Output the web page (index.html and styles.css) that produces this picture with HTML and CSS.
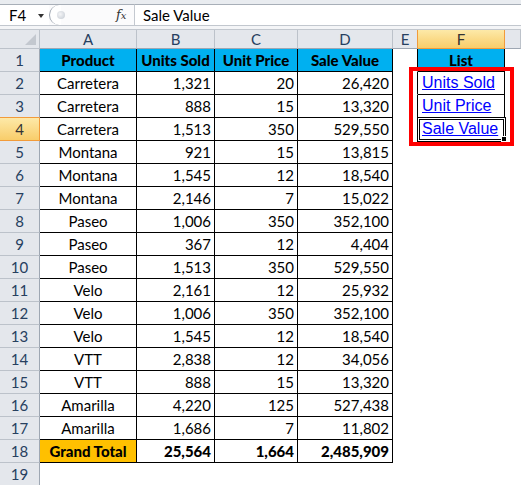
FILE: index.html
```html
<!DOCTYPE html>
<html>
<head>
<meta charset="utf-8">
<link rel="stylesheet" href="styles.css">
</head>
<body>
<div class="app">
  <div class="fbar">
    <div class="namebox"><span class="nb-text">F4</span><span class="dd"></span></div>
    <div class="mid"><span class="bracket"></span><span class="knob"></span><span class="fx"><i>f</i><i class="fxx">x</i></span></div>
    <div class="input">Sale Value</div>
  </div>
  <div class="gap"></div>
  <div class="sheet">
    <div class="corner"><span class="tri"></span></div>
    <div class="ch">A</div><div class="ch">B</div><div class="ch">C</div><div class="ch">D</div><div class="ch ch-pre">E</div><div class="ch ch-sel">F</div><div class="ch"></div>

    <div class="rh">1</div><div class="d hd">Product</div><div class="d hd">Units Sold</div><div class="d hd">Unit Price</div><div class="d hd">Sale Value</div><div class="e eb"></div><div class="d hd">List</div><div class="e"></div>

    <div class="rh">2</div><div class="d t">Carretera</div><div class="d n">1,321</div><div class="d n">20</div><div class="d n">26,420</div><div class="e eb"></div><div class="d lk"><a>Units Sold</a></div><div class="e"></div>

    <div class="rh rh-pre">3</div><div class="d t">Carretera</div><div class="d n">888</div><div class="d n">15</div><div class="d n">13,320</div><div class="e eb"></div><div class="d lk"><a>Unit Price</a></div><div class="e"></div>

    <div class="rh rh-sel">4</div><div class="d t">Carretera</div><div class="d n">1,513</div><div class="d n">350</div><div class="d n">529,550</div><div class="e eb"></div><div class="d lk active"><a>Sale Value</a><span class="handle"></span></div><div class="e"></div>

    <div class="rh">5</div><div class="d t">Montana</div><div class="d n">921</div><div class="d n">15</div><div class="d n">13,815</div><div class="e"></div><div class="e"></div><div class="e"></div>

    <div class="rh">6</div><div class="d t">Montana</div><div class="d n">1,545</div><div class="d n">12</div><div class="d n">18,540</div><div class="e"></div><div class="e"></div><div class="e"></div>

    <div class="rh">7</div><div class="d t">Montana</div><div class="d n">2,146</div><div class="d n">7</div><div class="d n">15,022</div><div class="e"></div><div class="e"></div><div class="e"></div>

    <div class="rh">8</div><div class="d t">Paseo</div><div class="d n">1,006</div><div class="d n">350</div><div class="d n">352,100</div><div class="e"></div><div class="e"></div><div class="e"></div>

    <div class="rh">9</div><div class="d t">Paseo</div><div class="d n">367</div><div class="d n">12</div><div class="d n">4,404</div><div class="e"></div><div class="e"></div><div class="e"></div>

    <div class="rh">10</div><div class="d t">Paseo</div><div class="d n">1,513</div><div class="d n">350</div><div class="d n">529,550</div><div class="e"></div><div class="e"></div><div class="e"></div>

    <div class="rh">11</div><div class="d t">Velo</div><div class="d n">2,161</div><div class="d n">12</div><div class="d n">25,932</div><div class="e"></div><div class="e"></div><div class="e"></div>

    <div class="rh">12</div><div class="d t">Velo</div><div class="d n">1,006</div><div class="d n">350</div><div class="d n">352,100</div><div class="e"></div><div class="e"></div><div class="e"></div>

    <div class="rh">13</div><div class="d t">Velo</div><div class="d n">1,545</div><div class="d n">12</div><div class="d n">18,540</div><div class="e"></div><div class="e"></div><div class="e"></div>

    <div class="rh">14</div><div class="d t">VTT</div><div class="d n">2,838</div><div class="d n">12</div><div class="d n">34,056</div><div class="e"></div><div class="e"></div><div class="e"></div>

    <div class="rh">15</div><div class="d t">VTT</div><div class="d n">888</div><div class="d n">15</div><div class="d n">13,320</div><div class="e"></div><div class="e"></div><div class="e"></div>

    <div class="rh">16</div><div class="d t">Amarilla</div><div class="d n">4,220</div><div class="d n">125</div><div class="d n">527,438</div><div class="e"></div><div class="e"></div><div class="e"></div>

    <div class="rh">17</div><div class="d t">Amarilla</div><div class="d n">1,686</div><div class="d n">7</div><div class="d n">11,802</div><div class="e"></div><div class="e"></div><div class="e"></div>

    <div class="rh">18</div><div class="d gt">Grand Total</div><div class="d n b">25,564</div><div class="d n b">1,664</div><div class="d n b">2,485,909</div><div class="e"></div><div class="e"></div><div class="e"></div>

    <div class="rh">19</div><div class="e"></div><div class="e"></div><div class="e"></div><div class="e"></div><div class="e"></div><div class="e"></div><div class="e"></div>
  </div>
  <div class="redbox"></div>
</div>
</body>
</html>
```

FILE: styles.css
```css
html, body {
  margin: 0;
  padding: 0;
  background: #ffffff;
}
body {
  font-family: Lato, "Open Sans", sans-serif;
  font-size: 15px;
  color: #000;
}
.app {
  position: relative;
  width: 521px;
  height: 485px;
  overflow: hidden;
}

/* formula bar */
.fbar {
  display: flex;
  height: 26px;
  box-sizing: border-box;
  padding-top: 4px;
  background: #e9ecf0;
  border-bottom: 1px solid #c2c7ce;
}
.namebox, .mid, .input {
  height: 21px;
  box-sizing: border-box;
  border-top: 1px solid #a8afb8;
  background: #fff;
}
.namebox {
  width: 49px;
  display: flex;
  align-items: center;
  position: relative;
}
.nb-text {
  padding-left: 9px;
  line-height: 20px;
}
.dd {
  position: absolute;
  left: 38px;
  top: 9px;
  width: 0;
  height: 0;
  border-left: 3px solid transparent;
  border-right: 3px solid transparent;
  border-top: 4px solid #333;
}
.mid {
  width: 86px;
  display: flex;
  align-items: center;
  border-right: 1px solid #c4c9d0;
  background: #fbfbfc;
}
.bracket {
  width: 12px;
  height: 20px;
  box-sizing: border-box;
  border-left: 1px solid #9aa2ad;
  border-radius: 10px 0 0 10px;
  background: #fff;
}
.knob {
  width: 8px;
  height: 8px;
  border-radius: 50%;
  background: radial-gradient(circle at 40% 40%, #f4f5f7, #c3c9d1);
  margin-left: -4px;
}
.fx {
  margin-left: 51px;
  font-family: "DejaVu Serif", "Liberation Serif", serif;
  font-size: 13px;
  color: #333;
  line-height: 20px;
}
.fxx {
  font-size: 10px;
}
.input {
  flex: 1;
  padding-left: 8px;
  line-height: 20px;
}
.gap {
  height: 3px;
  background: #f4f5f7;
  border-bottom: 1px solid #c2c7ce;
}

/* sheet */
.sheet {
  display: grid;
  grid-template-columns: 40px 97px 78px 83px 95px 25px 87px 16px;
  grid-template-rows: 19px repeat(19, 23px);
}
.sheet > div {
  box-sizing: border-box;
  border-right: 1px solid transparent;
  border-bottom: 1px solid transparent;
  white-space: nowrap;
  overflow: hidden;
}
.corner {
  background: #e4e7ec;
  border-right-color: #bcc2ca !important;
  border-bottom-color: #bcc2ca !important;
  position: relative;
}
.tri {
  position: absolute;
  right: 3px;
  bottom: 3px;
  width: 0;
  height: 0;
  border-left: 11px solid transparent;
  border-bottom: 11px solid #c3c8cf;
}
.ch {
  background: #e4e7ec;
  border-right-color: #bcc2ca !important;
  border-bottom-color: #9ea7b3 !important;
  text-align: center;
  line-height: 18px;
  color: #27405f;
}
.ch-pre {
  border-right-color: #f29b3a !important;
}
.ch-sel {
  background: linear-gradient(#fde9a8, #f8cd6a);
  border-right-color: #f29b3a !important;
  border-bottom-color: #f29b3a !important;
  color: #333;
}
.rh {
  background: #e4e7ec;
  border-right-color: #9ea7b3 !important;
  border-bottom-color: #bcc2ca !important;
  text-align: center;
  line-height: 22px;
  color: #27405f;
}
.rh-pre {
  border-bottom-color: #f29b3a !important;
}
.rh-sel {
  background: linear-gradient(#fde9a8, #f8cd6a);
  border-right-color: #f29b3a !important;
  border-bottom-color: #f29b3a !important;
  color: #333;
}
.d {
  border-right-color: #000 !important;
  border-bottom-color: #000 !important;
  line-height: 22px;
}
.eb {
  border-right-color: #000 !important;
}
.hd {
  background: #00b0f0;
  font-weight: 900;
  text-align: center;
}
.t {
  text-align: center;
}
.n {
  text-align: right;
  padding-right: 3px;
}
.b {
  font-weight: 900;
}
.gt {
  background: #ffc000;
  font-weight: 900;
  text-align: center;
}
.lk {
  padding-left: 4px;
  font-family: "Liberation Sans", Arial, sans-serif;
  font-size: 16px;
}
.lk a {
  color: #0000ff;
  text-decoration: underline;
}
.sheet > .active {
  position: relative;
  overflow: visible;
}
.active::after {
  content: "";
  position: absolute;
  left: -1px;
  top: -1px;
  width: 89px;
  height: 25px;
  box-sizing: border-box;
  border: 1px solid #000;
  box-shadow: inset 0 0 0 1px #fff, inset 0 0 0 2px #000;
}
.handle {
  position: absolute;
  left: 84px;
  top: 19px;
  width: 4px;
  height: 4px;
  background: #000;
  outline: 1px solid #fff;
  z-index: 2;
}

.redbox {
  position: absolute;
  left: 409px;
  top: 67px;
  width: 105px;
  height: 79px;
  box-sizing: border-box;
  border: 4px solid #ff0000;
}
```
